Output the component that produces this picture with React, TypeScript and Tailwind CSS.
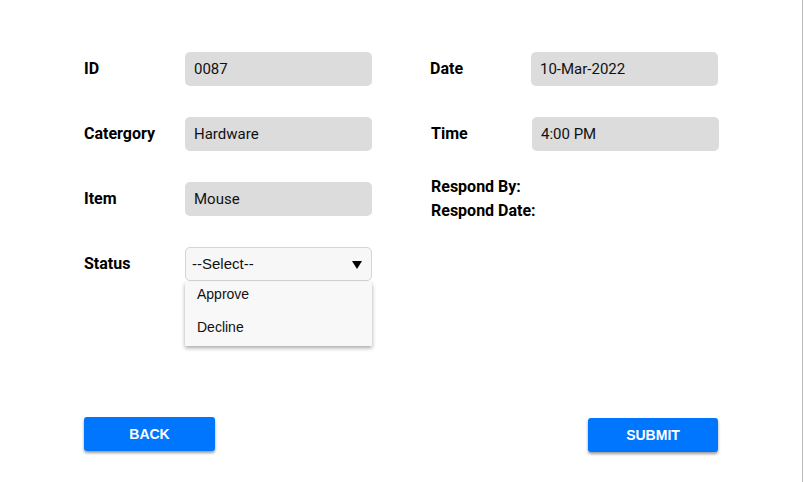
import React from 'react';

type FieldProps = {
  label: string;
  value: string;
};

function Field({ label, value }: FieldProps) {
  return (
    <div className="flex items-center h-[34px]">
      <span className="w-[101px] shrink-0 text-[16px] font-bold text-black">{label}</span>
      <div className="w-[187px] shrink-0 h-[34px] rounded-[5px] bg-[#dcdcdc] flex items-center pl-[9px] text-[15px] text-[#111]">
        {value}
      </div>
    </div>
  );
}

export default function App() {
  const [open] = React.useState(true);

  return (
    <div
      className="w-[804px] h-[482px] bg-white relative overflow-hidden"
      style={{ fontFamily: 'Roboto, "Liberation Sans", sans-serif' }}
    >
      <div className="absolute top-0 right-[1px] w-[1px] h-full bg-[#b8b8b8]" />

      <div className="pl-[84px] pt-[52px] flex flex-col">
        <div className="flex">
          {/* left column */}
          <div className="w-[346px] shrink-0 flex flex-col gap-[31px]">
            <Field label="ID" value="0087" />
            <Field label="Catergory" value="Hardware" />
            <Field label="Item" value="Mouse" />

            <div className="flex items-center h-[34px]">
              <span className="w-[101px] shrink-0 text-[16px] font-bold text-black">Status</span>
              <div className="relative w-[187px] shrink-0">
                <div
                  className="h-[34px] rounded-[5px] border border-[#d4d4d4] bg-[#f7f7f7] flex items-center justify-between pl-[6px] pr-[9px] text-[15px] text-[#111]"
                  style={{ fontFamily: '"Liberation Sans", Arial, sans-serif' }}
                >
                  <span>--Select--</span>
                  <svg width="10" height="8" viewBox="0 0 10 8" className="mt-[1px]">
                    <path d="M0 0 H10 L5 8 Z" fill="#000" />
                  </svg>
                </div>
                {open && (
                  <div
                    className="absolute left-0 top-[35px] w-[187px] h-[64px] bg-[#f8f8f8] shadow-[0_2px_4px_rgba(0,0,0,0.35)] flex flex-col text-[14px] text-[#111] pl-[12px]"
                    style={{ fontFamily: '"Liberation Sans", Arial, sans-serif' }}
                  >
                    <span className="h-[24px] leading-[24px]">Approve</span>
                    <span className="mt-[9px] leading-[24px]">Decline</span>
                  </div>
                )}
              </div>
            </div>
          </div>

          {/* right column */}
          <div className="shrink-0 flex flex-col gap-[31px]">
            <Field label="Date" value="10-Mar-2022" />
            <div className="pl-[1px]">
              <Field label="Time" value="4:00 PM" />
            </div>
            <div className="h-[34px] flex flex-col justify-center pl-[1px] text-[16px] font-bold text-black leading-[24px]">
              <span>Respond By:</span>
              <span>Respond Date:</span>
            </div>
          </div>
        </div>

        <div
          className="w-[634px] flex justify-between items-start mt-[136px]"
          style={{ fontFamily: '"Liberation Sans", Arial, sans-serif' }}
        >
          <button className="w-[131px] h-[34px] rounded-[3px] bg-[#0076ff] text-white font-bold text-[14px] shadow-[0_2px_3px_rgba(0,0,0,0.4)]">
            BACK
          </button>
          <button className="mt-[1px] w-[130px] h-[34px] rounded-[3px] bg-[#0076ff] text-white font-bold text-[14px] shadow-[0_2px_3px_rgba(0,0,0,0.4)]">
            SUBMIT
          </button>
        </div>
      </div>
    </div>
  );
}
